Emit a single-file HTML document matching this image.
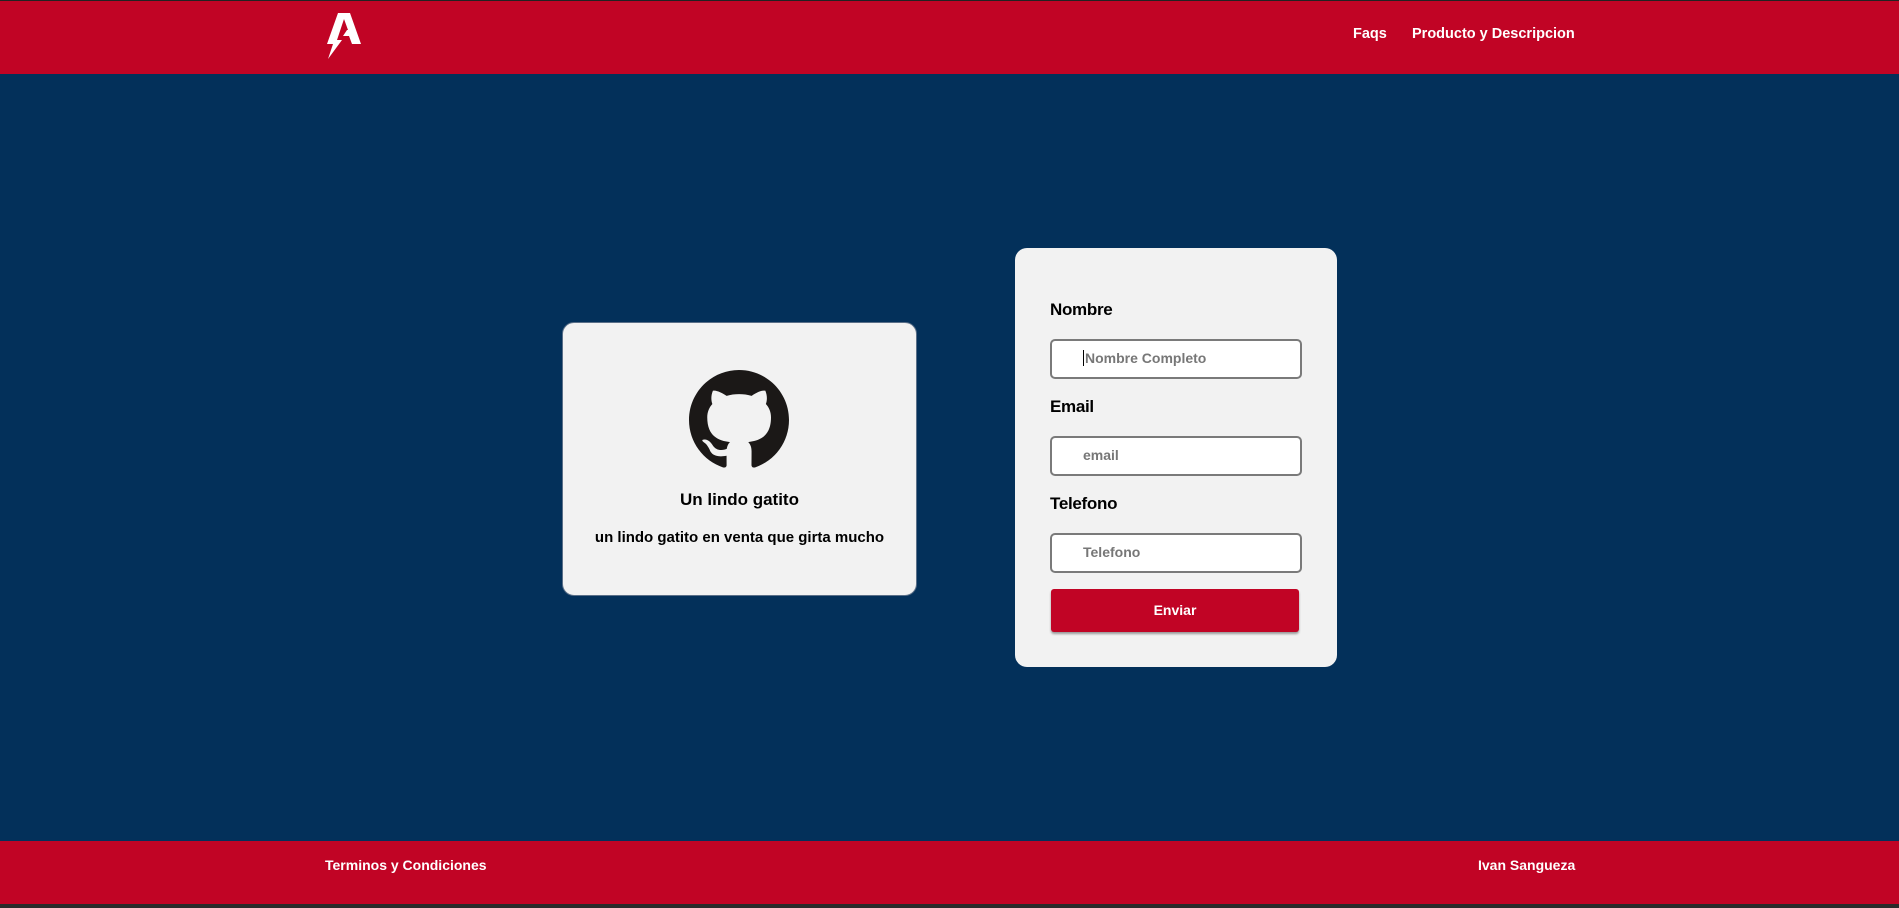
<!DOCTYPE html>
<html><head><meta charset="utf-8"><style>
*{margin:0;padding:0;box-sizing:border-box}
body{width:1899px;height:908px;background:#03305a;font-family:"Liberation Sans",sans-serif;position:relative;overflow:hidden}
.hdr{position:absolute;left:0;top:0;width:1899px;height:74px;background:#c10425;border-top:1px solid #222}
.nav{position:absolute;top:25px;color:#fff;font-weight:bold;font-size:14.5px}
.ftr{position:absolute;left:0;top:841px;width:1899px;height:63px;background:#c10425}
.strip{position:absolute;left:0;top:904px;width:1899px;height:4px;background:#2a2a2a}
.ft{position:absolute;top:857px;color:#fff;font-weight:bold;font-size:14px}
.card{position:absolute;background:#f2f2f2;border-radius:12px}
.lbl{position:absolute;left:35px;font-weight:bold;font-size:17px;color:#000;letter-spacing:-0.3px}
.inp{position:absolute;left:35px;width:252px;height:40px;background:#fff;border:2px solid #7a7a7a;border-radius:5px;color:#777;font-size:14px;font-weight:bold;padding:9px 0 0 31px}
.btn{position:absolute;left:36px;top:341px;width:248px;height:43px;background:#c10425;border-radius:3px;color:#fff;font-weight:bold;font-size:14px;text-align:center;line-height:43px;box-shadow:0 2px 2px #999}
</style></head><body>
<div class="hdr">
<svg style="position:absolute;left:325px;top:10px" width="38" height="50" viewBox="0 0 38 50"><path d="M13 2H25L36 33H27L24 25H18L22 19H23L19 8L12 29H17L3 48L8 33H2Z" fill="#fff"/></svg>
<div class="nav" style="left:1353px">Faqs</div>
<div class="nav" style="left:1412px">Producto y Descripcion</div>
</div>
<div class="card" style="left:562px;top:322px;width:355px;height:274px;border:1px solid #5a6f88">
<svg style="position:absolute;left:126px;top:47px" width="100" height="100" viewBox="0 0 16 16"><path fill="#1b1817" d="M8 0C3.58 0 0 3.58 0 8c0 3.54 2.290 6.530 5.470 7.590.4.07.55-.17.55-.38 0-.19-.01-.82-.01-1.49-2.01.37-2.53-.49-2.69-.94-.09-.23-.48-.94-.82-1.13-.28-.15-.68-.52-.01-.53.63-.01 1.08.58 1.23.82.72 1.21 1.87.87 2.33.66.07-.52.28-.87.51-1.07-1.78-.2-3.64-.89-3.64-3.95 0-.87.31-1.59.82-2.15-.08-.2-.36-1.02.08-2.12 0 0 .67-.21 2.2.82.64-.18 1.32-.27 2-.27.68 0 1.36.09 2 .27 1.53-1.04 2.2-.82 2.2-.82.44 1.1.16 1.92.08 2.12.51.56.82 1.27.82 2.15 0 3.07-1.87 3.75-3.65 3.95.29.25.54.73.54 1.48 0 1.07-.01 1.93-.01 2.2 0 .21.15.46.55.38A8.013 8.013 0 0016 8c0-4.42-3.58-8-8-8z"/></svg>
<div style="position:absolute;left:0;top:167px;width:100%;text-align:center;font-weight:bold;font-size:17px;color:#000">Un lindo gatito</div>
<div style="position:absolute;left:0;top:206px;width:100%;text-align:center;font-weight:bold;font-size:15px;color:#000">un lindo gatito en venta que girta mucho</div>
</div>
<div class="card" style="left:1015px;top:248px;width:322px;height:419px">
<div class="lbl" style="top:52px">Nombre</div>
<div class="inp" style="top:91px"><span style="border-left:1px solid #000;padding-left:1px">Nombre Completo</span></div>
<div class="lbl" style="top:149px">Email</div>
<div class="inp" style="top:188px">email</div>
<div class="lbl" style="top:246px">Telefono</div>
<div class="inp" style="top:285px">Telefono</div>
<div class="btn">Enviar</div>
</div>
<div class="ftr"></div>
<div class="ft" style="left:325px">Terminos y Condiciones</div>
<div class="ft" style="left:1478px">Ivan Sangueza</div>
<div class="strip"></div>
</body></html>
